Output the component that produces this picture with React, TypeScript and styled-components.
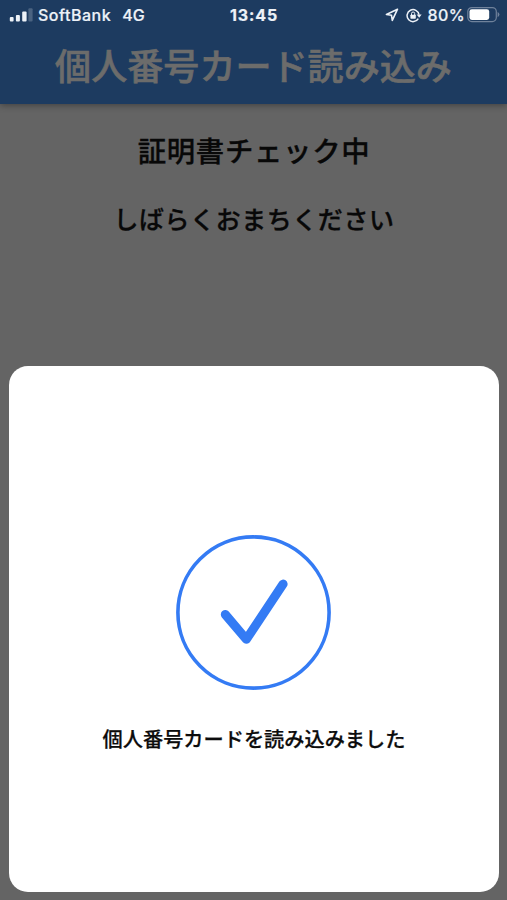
import React from "react";
import styled, { createGlobalStyle } from "styled-components";

const GlobalStyle = createGlobalStyle`
  * { box-sizing: border-box; }
  body { margin: 0; background: #646464; }
`;

const Screen = styled.div`
  width: 507px;
  height: 900px;
  display: flex;
  flex-direction: column;
  background: #646464;
  overflow: hidden;
  font-family: "Noto Sans CJK JP", sans-serif;
`;

const Header = styled.header`
  height: 104px;
  flex: none;
  background: #1d3b60;
  box-shadow: 0 1px 7px rgba(0, 0, 0, 0.4);
`;

const StatusBar = styled.div`
  height: 30px;
  display: grid;
  grid-template-columns: 1fr auto 1fr;
  align-items: center;
  padding: 0 7px 0 9px;
  color: #edf2f8;
  font: 500 16px/30px Inter, sans-serif;
  -webkit-text-stroke: 0.2px currentColor;
`;

const StatusGroup = styled.div<{ $end?: boolean }>`
  display: flex;
  align-items: center;
  justify-content: ${(p) => (p.$end ? "flex-end" : "flex-start")};
  white-space: nowrap;
  svg { display: block; flex: none; }
`;

const StatusText = styled.span<{ $left?: number; $spacing?: number }>`
  margin-left: ${(p) => p.$left ?? 0}px;
  letter-spacing: ${(p) => p.$spacing ?? 0}px;
`;

const Clock = styled.span`
  margin-right: 1px;
  font-weight: 700;
  letter-spacing: 0.9px;
`;

const Title = styled.h1`
  margin: 0;
  height: 68px;
  color: #6c6c6b;
  font-size: 36.1px;
  font-weight: 500;
  line-height: 68px;
  text-align: center;
  white-space: nowrap;
  -webkit-text-stroke: 0.6px currentColor;
`;

const Messages = styled.main`
  height: 262px;
  flex: none;
  padding-top: 26px;
  text-align: center;
  color: #080808;
`;

const Message = styled.p<{ $size: number; $gap?: number; $spacing?: number }>`
  margin: ${(p) => p.$gap ?? 0}px 0 0;
  height: 40px;
  font-size: ${(p) => p.$size}px;
  letter-spacing: ${(p) => p.$spacing ?? 0}px;
  text-indent: 1px;
  line-height: 40px;
  font-weight: 500;
  white-space: nowrap;
  -webkit-text-stroke: 0.3px currentColor;
`;

const Sheet = styled.section`
  width: 490px;
  height: 526px;
  flex: none;
  margin-left: 9px;
  border-radius: 19px;
  background: #fff;
  display: flex;
  flex-direction: column;
  align-items: center;
  padding-top: 169px;
`;

const Caption = styled.p`
  margin: 33px 0 0;
  height: 30px;
  color: #0c0c0c;
  font-size: 20.2px;
  font-weight: 500;
  line-height: 30px;
  white-space: nowrap;
  -webkit-text-stroke: 0.25px currentColor;
`;

const SignalIcon = () => (
  <svg width="24" height="14" viewBox="0 0 24 14" fill="#edf2f8">
    <rect x="0.8" y="9" width="3.8" height="4.5" rx="1" />
    <rect x="6.9" y="7" width="4" height="6.5" rx="1" />
    <rect x="13.2" y="3.5" width="4.4" height="10" rx="1" />
    <rect x="19.4" y="0.3" width="4.2" height="13.2" rx="1" opacity="0.22" />
  </svg>
);

const LocationIcon = () => (
  <svg width="14" height="14" viewBox="0 0 14 14" fill="none" stroke="#edf2f8" strokeWidth="1.6" strokeLinejoin="round">
    <path d="M12.5 1.2 1.4 6.5 6.5 7.3 7.3 12.4Z" />
  </svg>
);

const RotationLockIcon = () => (
  <svg width="16" height="15" viewBox="0 0 16 15" fill="none" stroke="#edf2f8">
    <path d="M12.3 10.6A6 6 0 1 1 13 6.7" strokeWidth="1.5" />
    <path d="M10.7 6.5h4.9l-2.4 3.3Z" fill="#edf2f8" stroke="none" />
    <rect x="4.4" y="6.7" width="5.4" height="4" rx="0.6" fill="#edf2f8" stroke="none" />
    <path d="M5.5 7V5.6a1.6 1.6 0 0 1 3.2 0V7" strokeWidth="1" />
  </svg>
);

const BatteryIcon = () => (
  <svg width="33" height="16" viewBox="0 0 33 16">
    <rect x="0.8" y="0.6" width="28.5" height="14" rx="4" fill="none" stroke="#70829b" strokeWidth="1.2" />
    <rect x="2.5" y="2.3" width="19.7" height="10.6" rx="2.3" fill="#fff" />
    <path d="M30.6 5q1.8 .8 1.8 2.6t-1.8 2.6Z" fill="#70829b" />
  </svg>
);

const SuccessIcon = () => (
  <svg width="156" height="156" viewBox="0 0 156 156" fill="none" stroke="#347bf4">
    <circle cx="77.5" cy="77.5" r="75.6" strokeWidth="3.6" />
    <path d="M49.3 79.5 70.4 104.3 107.1 49.1" strokeWidth="9" strokeLinecap="round" strokeLinejoin="round" />
  </svg>
);

export default function App() {
  return (
    <>
      <GlobalStyle />
      <Screen>
        <Header>
          <StatusBar>
            <StatusGroup>
              <SignalIcon />
              <StatusText $left={5} $spacing={0.5}>SoftBank</StatusText>
              <StatusText $left={11}>4G</StatusText>
            </StatusGroup>
            <Clock>13:45</Clock>
            <StatusGroup $end>
              <LocationIcon />
              <StatusText $left={7}><RotationLockIcon /></StatusText>
              <StatusText $left={6} $spacing={0.4}>80%</StatusText>
              <StatusText $left={2}><BatteryIcon /></StatusText>
            </StatusGroup>
          </StatusBar>
          <Title>個人番号カード読み込み</Title>
        </Header>
        <Messages>
          <Message $size={28.4} $spacing={0.7}>証明書チェック中</Message>
          <Message $size={25} $gap={28} $spacing={0.55}>しばらくおまちください</Message>
        </Messages>
        <Sheet>
          <SuccessIcon />
          <Caption>個人番号カードを読み込みました</Caption>
        </Sheet>
      </Screen>
    </>
  );
}
